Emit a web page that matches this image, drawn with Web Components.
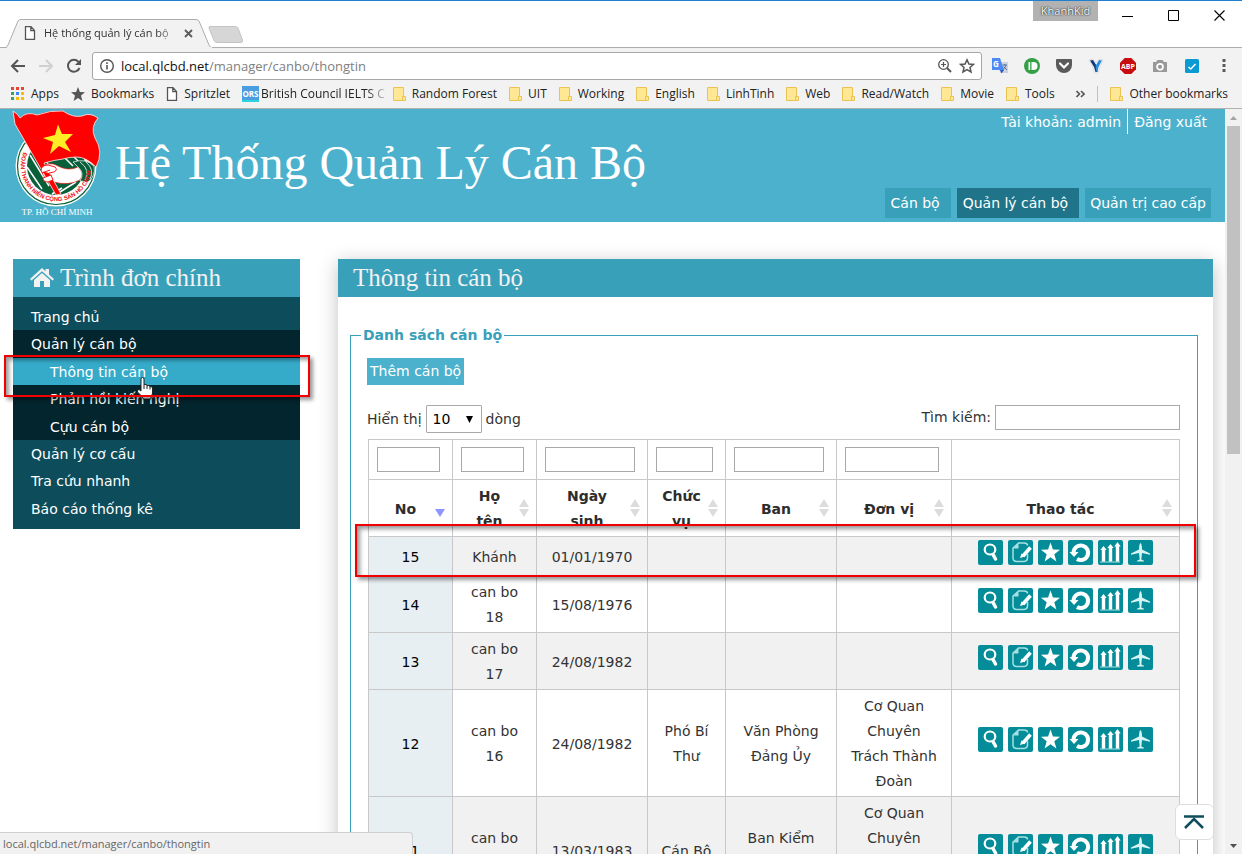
<!DOCTYPE html>
<html lang="vi">
<head>
<meta charset="utf-8">
<title>Hệ thống quản lý cán bộ</title>
<style>
  html, body { margin: 0; height: 100%; overflow: hidden; background: #fff; }
</style>
</head>
<body>
<browser-window></browser-window>
<script>
const define = (name, html) => customElements.define(name, class extends HTMLElement {
  constructor() {
    super();
    this.attachShadow({ mode: 'open' });
  }
  connectedCallback() {
    if (this.shadowRoot.childNodes.length) return;
    const t = document.createElement('template');
    t.innerHTML = '<style>*{box-sizing:border-box}</style>' + html;
    this.shadowRoot.append(t.content.cloneNode(true));
  }
});

/* ---------- browser chrome ---------- */
define('tab-strip', `
<style>
  :host { display: flex; height: 47px; background: #fff; border-top: 1px solid #1f7fd1; box-sizing: border-box; position: relative; z-index: 1; align-items: flex-end; }
  .tab { position: relative; width: 212px; height: 30px; margin: 0 0 -1px 4px; display: flex; align-items: center; padding: 0 20px; box-sizing: border-box; gap: 8px; }
  .tab > svg.shape { position: absolute; inset: 0; z-index: -1; }
  .title { font: 11px/18px "Open Sans", "Noto Sans", sans-serif; color: #333; width: 132px; white-space: nowrap;
    -webkit-mask-image: linear-gradient(90deg, #000 85%, rgba(0,0,0,.3)); mask-image: linear-gradient(90deg, #000 85%, rgba(0,0,0,.3)); }
  button { border: 0; background: none; padding: 0; display: flex; align-items: center; justify-content: center; }
  .new { margin: 0 0 3px -8px; }
  .user { align-self: flex-start; margin-left: auto; width: 65px; height: 20px; background: #b2b2b2; color: #fff; font: 11px/20px "Open Sans", sans-serif; text-align: center; text-shadow: 0 0 2px #222, 0 0 1px #222; }
  .win { display: flex; align-self: flex-start; margin-left: 6px; }
  .win button { width: 46px; height: 28px; }
</style>
<div class="tab">
  <svg class="shape" width="212" height="30"><path d="M0 29.5H2Q3 29 4 27L14 3Q15 1.500 17 1.500H192Q194 1.500 195 3L205 27Q206 29.500 208 29.500H212" fill="#f2f2f2" stroke="#adadad"/><path d="M3 29.500H208" stroke="#f2f2f2"/></svg>
  <svg width="12" height="14" viewBox="0 0 12 14"><path d="M1.500 .7H7L10.500 4.500V13.300H1.500ZM6.800 .7V4.700H10.500" fill="#fff" stroke="#555" stroke-width="1.300"/></svg>
  <span class="title">Hệ thống quản lý cán bộ</span>
  <button aria-label="Đóng"><svg width="9" height="9"><path d="M1 1L8 8M8 1L1 8" stroke="#5a5a5a" stroke-width="1.800"/></svg></button>
</div>
<button class="new" aria-label="Tab mới"><svg width="36" height="19"><path d="M2 1.500H27Q29 1.500 30 3L34.500 15Q35 17.500 33 17.500H9Q7 17.500 6 15.500L1 3Q.5 1.500 2 1.500Z" fill="#d6d6d6" stroke="#c4c4c4"/></svg></button>
<span class="user">KhanhKid</span>
<div class="win">
  <button aria-label="Thu nhỏ"><svg width="11" height="11"><path d="M0 6.500H11" stroke="#000"/></svg></button>
  <button aria-label="Phóng to"><svg width="11" height="11"><path d="M.5 .5H10.500V10.500H.5Z" fill="none" stroke="#000"/></svg></button>
  <button aria-label="Đóng cửa sổ"><svg width="11" height="11"><path d="M.5 .5L10.500 10.500M10.500 .5L.5 10.500" stroke="#000" stroke-width="1.100"/></svg></button>
</div>`);

define('address-bar', `
<style>
  :host { display: flex; height: 33px; background: #f2f2f2; border-top: 1px solid #adadad; align-items: center; padding: 4px 2px 0 0; box-sizing: border-box; }
  button { border: 0; background: none; padding: 0; display: flex; align-items: center; justify-content: center; width: 28px; height: 28px; flex: none; }
  .nav { display: flex; padding-left: 4px; width: 92px; flex: none; }
  .box { position: relative; flex: 1; height: 28px; background: #fff; border: 1px solid #a6a6a6; border-radius: 3px; display: flex; align-items: center; padding: 0 6px; min-width: 0; }
  .url { flex: 1; font: 13px/20px "Open Sans", sans-serif; color: #808080; padding-left: 6px; white-space: nowrap; }
  .url b { font-weight: 400; color: #111; }
  .box svg { flex: none; } .box svg + svg { margin-left: 6px; }
  .ext { display: flex; flex: none; padding-left: 2px; }
  .ext button { width: 32px; }
</style>
<div class="nav">
  <button aria-label="Quay lại"><svg width="16" height="14"><path d="M15 7H2M8 1L2 7L8 13" fill="none" stroke="#555" stroke-width="2"/></svg></button>
  <button aria-label="Tiến"><svg width="16" height="14"><path d="M1 7H14M8 1L14 7L8 13" fill="none" stroke="#d0d0d0" stroke-width="2"/></svg></button>
  <button aria-label="Tải lại"><svg width="16" height="16"><path d="M13.500 10A6 6 0 1 1 12.500 3.800" fill="none" stroke="#555" stroke-width="2"/><path d="M15 1V7H9Z" fill="#555"/></svg></button>
</div>
<div class="box">
  <svg width="16" height="16"><circle cx="8" cy="8" r="6.300" fill="none" stroke="#555" stroke-width="1.400"/><path d="M8 7V11.500M8 4.300V6" stroke="#555" stroke-width="1.600"/></svg>
  <span class="url"><b>local.qlcbd.net</b>/manager/canbo/thongtin</span>
  <svg width="16" height="16"><circle cx="6.500" cy="6.500" r="4.800" fill="none" stroke="#555" stroke-width="1.300"/><path d="M10 10L14 14" stroke="#555" stroke-width="2"/><path d="M4 6.500H9M6.500 4V9" stroke="#555" stroke-width="1.200"/></svg>
  <svg width="16" height="16"><path d="M8 1.800L9.900 6L14.400 6.400L11 9.400L12 13.900L8 11.500L4 13.900L5 9.400L1.600 6.400L6.100 6Z" fill="none" stroke="#555" stroke-width="1.500"/></svg>
</div>
<div class="ext">
  <button aria-label="Dịch"><svg width="18" height="16"><path d="M7 4H17V15H9Z" fill="#ccd3dc"/><path d="M1 0H9L13 12H1Z" fill="#4c8bf5"/><path d="M9 12H13L10.500 15.500Z" fill="#2a56c6"/><text x="2" y="9" font-family="Open Sans" font-size="8" font-weight="700" fill="#fff">G</text><path d="M11.500 7H16M13.800 6V7M15 7Q14 10 12 11.500M12.500 8.500L16 12" stroke="#56729a" fill="none"/></svg></button>
  <button aria-label="Pushbullet"><svg width="16" height="16"><circle cx="8" cy="8" r="8" fill="#34a046"/><path d="M4.500 4H6.200V12H4.500ZM7.500 4H9.500A4 4 0 0 1 9.500 12H7.500Z" fill="#fff"/></svg></button>
  <button aria-label="Pocket"><svg width="16" height="14"><path d="M1 0H15Q16 0 16 1V6A8 8 0 0 1 0 6V1Q0 0 1 0Z" fill="#5a5a5a"/><path d="M4 4.500L8 8.500L12 4.500" fill="none" stroke="#fff" stroke-width="2.200" stroke-linecap="round"/></svg></button>
  <button aria-label="Y"><svg width="16" height="16"><path d="M1 2L5 1L8 5L11 1L15 2L12 9L10 15H6.500L5 9Z" fill="#fff" stroke="#dcdcdc"/><path d="M2 2.500L5 2L8.500 7.500L9.500 14H7.500L6 9Z" fill="#123a7a"/><path d="M11 2L14 2.500L10.500 9L9.500 14H8.500L7.500 8Z" fill="#2d8be0"/></svg></button>
  <button aria-label="Adblock Plus"><svg width="16" height="16"><path d="M4.700 0H11.300L16 4.700V11.300L11.300 16H4.700L0 11.300V4.700Z" fill="#c70d0d"/><text x="8" y="10.800" text-anchor="middle" font-family="Open Sans" font-size="7" font-weight="700" fill="#fff">ABP</text></svg></button>
  <button aria-label="Chụp ảnh"><svg width="16" height="14"><path d="M1 3H4L5.500 1H10.500L12 3H15V13H1Z" fill="#999"/><circle cx="8" cy="7.800" r="3" fill="#999" stroke="#fff" stroke-width="1.700"/></svg></button>
  <button aria-label="Hoàn tất"><svg width="14" height="14"><rect width="14" height="14" rx="1.500" fill="#0a9bd2"/><path d="M3.500 8L5.800 10L10.500 5" fill="none" stroke="#fff" stroke-width="1.500"/></svg></button>
  <button aria-label="Menu"><svg width="4" height="14"><path d="M.5 0h3v3h-3zM.5 5h3v3h-3zM.5 10h3v3h-3z" fill="#5a5a5a"/></svg></button>
</div>`);

const FOLDER = '<svg width="13" height="14"><path d="M.5 .5H10.500V9.500H12.500V13.500H.5Z" fill="#ffe793" stroke="#eac452"/><path d="M9.500 13V9.500H12" stroke="#eac452" fill="none"/></svg>';
const folder = n => `<a href="#">${FOLDER}<span>${n}</span></a>`;
define('bookmark-bar', `
<style>
  :host { display: flex; height: 29px; background: #f2f2f2; border-bottom: 1px solid #b0b0b0; align-items: center; padding: 0 14px 0 11px; gap: 12px; font: 12px/18px "Open Sans", sans-serif; box-sizing: border-box; }
  a { display: flex; align-items: center; gap: 6px; color: #222; text-decoration: none; white-space: nowrap; flex: none; }
  svg { flex: none; }
  .fade { gap: 2px; margin-right: -4px; }
  .fade span { -webkit-mask-image: linear-gradient(90deg, #000 85%, rgba(0,0,0,.2)); mask-image: linear-gradient(90deg, #000 85%, rgba(0,0,0,.2)); }
  .end { margin-left: auto; }
  .sep { width: 1px; height: 16px; background: #c0c0c0; flex: none; }
</style>
<a href="#"><svg width="14" height="14"><path d="M0 0h3v3H0zM5 0h3v3H5zM10 0h3v3h-3z" fill="#ea4335"/><path d="M0 5h3v3H0z" fill="#34a853"/><path d="M5 5h3v3H5z" fill="#4285f4"/><path d="M10 5h3v3h-3z" fill="#fbbc05"/><path d="M0 10h3v3H0z" fill="#34a853"/><path d="M5 10h3v3H5zM10 10h3v3h-3z" fill="#fbbc05"/></svg><span>Apps</span></a>
<a href="#"><svg width="14" height="14"><path d="M7 0L8.900 5L14 5.300L10 8.600L11.400 14L7 10.900L2.600 14L4 8.600L0 5.300L5.100 5Z" fill="#555"/></svg><span>Bookmarks</span></a>
<a href="#"><svg width="12" height="14"><path d="M1.500 .7H7L10.500 4.500V13.300H1.500ZM6.800 .7V4.700H10.500" fill="#fff" stroke="#555" stroke-width="1.300"/></svg><span>Spritzlet</span></a>
<a href="#" class="fade"><svg width="17" height="16"><rect width="17" height="16" fill="#4a9ee0"/><rect y="14" width="17" height="2" fill="#2ed3e0"/><text x="8.500" y="11" text-anchor="middle" font-family="Open Sans" font-size="8" font-weight="700" fill="#fff">ORS</text></svg><span>British Council IELTS C</span></a>
${['Random Forest', 'UIT', 'Working', 'English', 'LinhTinh', 'Web', 'Read/Watch', 'Movie', 'Tools'].map(folder).join('')}
<a href="#" class="end" aria-label="Thêm"><svg width="9" height="8"><path d="M.5 1L3.500 4L.5 7M5 1L8 4L5 7" fill="none" stroke="#555" stroke-width="1.600"/></svg></a>
<span class="sep"></span>
${folder('Other bookmarks')}`);

define('page-scrollbar', `
<style>
  :host { display: flex; flex-direction: column; align-items: center; justify-content: space-between; width: 17px; flex: none; background: #f1f1f1; padding: 6px 0; box-sizing: border-box; }
  .thumb { width: 13px; height: 328px; background: #c1c1c1; }
  .top { display: flex; flex-direction: column; align-items: center; gap: 6px; }
</style>
<div class="top"><svg width="7" height="5"><path d="M0 5L3.500 1L7 5Z" fill="#a3a3a3"/></svg><div class="thumb"></div></div>
<svg width="7" height="4"><path d="M0 0H7L3.500 4Z" fill="#505050"/></svg>`);

/* ---------- site ---------- */
define('union-logo', `
<style>:host { display: block; } svg { display: block; }</style>
<svg width="90" height="110" viewBox="0 0 90 110">
  <defs><path id="ring" d="M11.500 43A35.500 35.500 0 1 0 79 64"/></defs>
  <circle cx="44" cy="57" r="40.500" fill="#fff"/>
  <circle cx="44" cy="57" r="38.500" fill="none" stroke="#086238" stroke-width="1.200"/>
  <circle cx="44" cy="57" r="29" fill="#07603a"/>
  <g stroke="#fff" stroke-width="1.500" fill="none"><path d="M18 46L37 77M24 37L42 64M15 58L30 80M50 46L61 57M58 44L66 52M48 83L64 73M40 85L50 79"/></g>
  <path d="M30 57Q38 53 44 56Q56 63 66 58Q73 64 68 71Q56 77 42 73Q32 71 30 63Z" fill="#fff" stroke="#fe0000" stroke-width=".6"/>
  <path d="M61 53Q74 49 82 57Q84 67 76 73L68 72Q73 64 66 58Z" fill="#07603a" stroke="#fff" stroke-width=".7"/>
  <path d="M68 53Q79 61 73 71M74 53Q83 61 78 70" fill="none" stroke="#fff" stroke-width=".8"/>
  <path d="M1 2Q6 5 8 9Q15 2 25 6Q39 1 51 2Q61 9 70 7Q78 3 86 9Q78 18 83 29Q92 43 84 58Q74 48 65 48Q57 48 51 50Q42 51 32 54L49 85L44 86L3 15Z" fill="#fe0000" stroke="#ffd8d8" stroke-width=".9"/>
  <path d="M46 15.500L50 25L61 25L53 33L59 43L47 37L38 45L41 33L31 29L43 26Z" fill="#ffee25"/>
  <path d="M29 62Q29 56 36 56L43 58Q46 61 42 63L37 64M30 64L38 61M31 69L39 66L41 71L36 73Q31 73 31 69Z" fill="#fff" stroke="#fe0000" stroke-width=".9"/>
  <text font-family="Liberation Sans" font-size="6" font-weight="700" fill="#e11"><textPath href="#ring">ĐOÀN THANH NIÊN CỘNG SẢN HỒ CHÍ MINH</textPath></text>
  <text x="45" y="106" text-anchor="middle" font-family="Liberation Serif" font-size="9" fill="#fff">TP. HỒ CHÍ MINH</text>
</svg>`);

define('site-header', `
<style>
  :host { display: flex; height: 113px; background: #4cb1cd; color: #fff; padding: 0 14px 4px 12px; box-sizing: border-box; }
  h1 { margin: 26px 0 0 13px; font: 48px/56px "Liberation Serif", serif; white-space: nowrap; }
  .right { margin-left: auto; display: flex; flex-direction: column; justify-content: space-between; align-items: flex-end; }
  a { color: #fff; text-decoration: none; white-space: nowrap; }
  .account { display: flex; font: 14px/25px "DejaVu Sans", sans-serif; padding-right: 4px; }
  .account a { line-height: 24px; padding-top: 1px; }
  .account a + a { border-left: 1px solid #fff; margin-left: 6px; padding-left: 6px; }
  nav { display: flex; gap: 6px; font: 14px/30px "DejaVu Sans", sans-serif; }
  nav a { padding: 0 5px; background: #39a0ba; }
  nav a.wide { padding: 0 11px 0 6px; }
  nav a.on { background: #1f7489; }
</style>
<union-logo></union-logo>
<h1>Hệ Thống Quản Lý Cán Bộ</h1>
<div class="right">
  <div class="account"><a href="#">Tài khoản: admin</a><a href="#">Đăng xuất</a></div>
  <nav><a class="wide" href="#">Cán bộ</a><a class="wide on" href="#">Quản lý cán bộ</a><a href="#">Quản trị cao cấp</a></nav>
</div>`);

define('side-menu', `
<style>
  :host { display: block; width: 287px; flex: none; background: #0d4c5b; font: 14px/27px "DejaVu Sans", sans-serif; }
  h2 { margin: 0; height: 38px; background: #39a0ba; color: #f2f2f2; font: 25px/37px "Liberation Serif", serif; display: flex; align-items: center; gap: 6px; padding: 0 0 1px 17px; white-space: nowrap; box-sizing: border-box; }
  ul { list-style: none; margin: 0; padding: 0; }
  .root { display: grid; grid-template-rows: repeat(8, 1fr); height: 232px; padding: 6px 0 7px; }
  .root > li { display: grid; }
  .group { grid-row: span 4; grid-template-rows: subgrid; background: #03252e; }
  .group > ul { grid-row: span 3; display: grid; grid-template-rows: subgrid; }
  a { display: block; padding: 1px 0 0 18px; line-height: 26px; color: #fff; text-decoration: none; white-space: nowrap; }
  .group > ul a { padding-left: 37px; }
  .on { position: relative; background: #35abc9; }
  .mark { position: absolute; inset: -3px -10px -12px -9px; border: 2px solid #f00000; box-shadow: 3px 3px 4px rgba(0,0,0,.4), inset 3px 3px 4px rgba(0,0,0,.4); z-index: 2; }
  .hand { position: absolute; left: 122px; top: 18px; z-index: 1; }
</style>
<h2><svg width="24" height="20" viewBox="0 0 24 20"><path d="M12 0L15.500 3.300V1H19V6.500L24 11L22.500 12.600L12 3.200L1.500 12.600L0 11Z" fill="#f2f2f2"/><path d="M12 5L20 12V19H14V13H10V19H4V12Z" fill="#f2f2f2"/></svg>Trình đơn chính</h2>
<ul class="root">
  <li><a href="#">Trang chủ</a></li>
  <li class="group"><a href="#">Quản lý cán bộ</a>
    <ul>
      <li class="on"><a href="#">Thông tin cán bộ</a><span class="mark"></span>
        <svg class="hand" width="20" height="24" viewBox="0 0 20 24"><path d="M6 15V3Q6 1.500 7.500 1.500T9 3V9Q9.500 8 11 8.500T12 10Q13 9 14 9.500T15 11Q16 10 17 11T17.500 13V17Q17 20 15.500 23H8.500Q6 19 2.500 16Q2 13.500 4 13.500Z" fill="#fff" stroke="#222"/><path d="M9 9V13M12 10V13M15 11V13.500" stroke="#222"/></svg></li>
      <li><a href="#">Phản hồi kiến nghị</a></li>
      <li><a href="#">Cựu cán bộ</a></li>
    </ul></li>
  <li><a href="#">Quản lý cơ cấu</a></li>
  <li><a href="#">Tra cứu nhanh</a></li>
  <li><a href="#">Báo cáo thống kê</a></li>
</ul>`);

define('row-actions', `
<style>
  :host { display: flex; justify-content: center; gap: 5px; padding: 0 0 7px; }
  button { width: 25px; height: 25px; border: 0; padding: 0; border-radius: 2px; background: #048d99; display: block; }
  svg { display: block; fill: none; stroke: #fff; }
</style>
<button aria-label="Xem"><svg width="25" height="25"><ellipse cx="12" cy="9.500" rx="5.300" ry="5" stroke-width="2.200"/><path d="M15 14.500L17.500 19" stroke-width="3.500" stroke-linecap="round"/></svg></button>
<button aria-label="Sửa"><svg width="25" height="25"><path d="M19.500 14V18Q19.500 21 16 21.500H9Q5 21.500 5 18V8L10.500 3H16Q19.500 3 19.500 5.500" stroke="#a5e0e2" stroke-width="1.500"/><path d="M5 8.500L10.500 3V8.500Z" fill="#a5e0e2" stroke="none"/><path d="M22.500 7.500L15 16" stroke-width="3.600"/><path d="M13.500 13.500L12 18L17 16.500Z" fill="#fff" stroke="none"/></svg></button>
<button aria-label="Đánh dấu"><svg width="25" height="25"><path d="M12.500 2.500L14.900 9.500L22 9.800L16.300 14.300L18.400 21.500L12.500 17.200L6.600 21.500L8.700 14.300L3 9.800L10.100 9.500Z" fill="#fff" stroke="none"/></svg></button>
<button aria-label="Khôi phục"><svg width="25" height="25"><path d="M5.500 12.500A7.300 7.300 0 1 1 9 19" stroke-width="4"/><path d="M1.500 12H10.500L6 17Z" fill="#fff" stroke="none"/></svg></button>
<button aria-label="Thăng tiến"><svg width="25" height="25"><path d="M2 22H22" stroke="#a5e0e2"/><path d="M5.500 21.500V9M12.500 21.500V7M19.500 21.500V6" stroke-width="3.400"/><path d="M2.300 10L5.500 6L8.700 10ZM9.300 8L12.500 4L15.700 8ZM16.300 6.500L19.500 2L22.700 6.500Z" fill="#fff" stroke="none"/></svg></button>
<button aria-label="Công tác"><svg width="25" height="25"><path d="M12.500 3Q14 4 14 9.500L22 13.500V14.800L14 13L13.300 19.500L16 20.700V21.500H9V20.700L11.700 19.500L11 13L3 14.800V13.500L11 9.500Q11 4 12.500 3Z" fill="#d8f4f4" stroke="none"/></svg></button>`);

const rows = [
  ['15', 'Khánh', '01/01/1970', '', '', ''],
  ['14', 'can bo 18', '15/08/1976', '', '', ''],
  ['13', 'can bo 17', '24/08/1982', '', '', ''],
  ['12', 'can bo 16', '24/08/1982', 'Phó Bí Thư', 'Văn Phòng Đảng Ủy', 'Cơ Quan Chuyên Trách Thành Đoàn'],
  ['11', 'can bo 15', '13/03/1983', 'Cán Bộ', 'Ban Kiểm Tra', 'Cơ Quan Chuyên Trách Thành Đoàn'],
];
const heads = ['No', 'Họ tên', 'Ngày sinh', 'Chức vụ', 'Ban', 'Đơn vị', 'Thao tác'];
const sort = i => i
  ? '<svg width="10" height="18"><path d="M0 8L5 0L10 8ZM0 10L5 18L10 10Z" fill="#dcdcdc"/></svg>'
  : '<svg width="10" height="18"><path d="M0 10L5 18L10 10Z" fill="#8d94ff"/></svg>';
define('staff-table', `
<style>
  :host { display: block; position: relative; color: #333; font: 14px/25px "DejaVu Sans", sans-serif; }
  table { border-collapse: collapse; table-layout: fixed; width: 100%; }
  th, td { border: 1px solid #c8c8c8; text-align: center; vertical-align: middle; padding: 4px 12px 2px; }
  .filters td { height: 40px; padding: 0 12px 0 8px; }
  input { display: block; width: 100%; height: 25px; border: 1px solid #a9a9a9; padding: 0; background: #fff; }
  th { position: relative; padding: 4px 22px 2px 12px; color: #2d2d2d; }
  th svg { position: absolute; right: 7px; top: 19px; }
  tbody tr:nth-child(odd) { background: #f1f1f1; }
  tbody td:first-child { background: #e7eff3; color: #000; }
  tbody td:last-child { padding: 3px 0; }
  .c1 { width: 84px } .c3 { width: 111px } .c4 { width: 78px } .c6 { width: 115px }
  .mark { position: absolute; left: -13px; right: -16px; top: 85px; height: 53px; border: 2px solid #f00000; box-shadow: 3px 3px 4px rgba(0,0,0,.4), inset 3px 3px 4px rgba(0,0,0,.4); pointer-events: none; }
</style>
<table>
  <colgroup><col class="c1"><col class="c1"><col class="c3"><col class="c4"><col class="c3"><col class="c6"><col></colgroup>
  <thead>
    <tr class="filters">${heads.map((h, i) => i < 6 ? `<td><input type="text" aria-label="${h}"></td>` : '<td></td>').join('')}</tr>
    <tr>${heads.map((h, i) => `<th>${h}${sort(i)}</th>`).join('')}</tr>
  </thead>
  <tbody>${rows.map(r => `<tr>${r.map(c => `<td>${c}</td>`).join('')}<td><row-actions></row-actions></td></tr>`).join('')}</tbody>
</table>
<div class="mark"></div>`);

define('content-panel', `
<style>
  :host { display: block; flex: 1; min-width: 0; background: #fff; box-shadow: 0 4px 18px rgba(0,0,0,.25); font: 14px/25px "DejaVu Sans", sans-serif; color: #333; }
  h2 { margin: 0; height: 38px; background: #39a0ba; color: #f2f2f2; font: 25px/37px "Liberation Serif", serif; padding-left: 15px; }
  fieldset { margin: 26px 15px 0 12px; border: 1px solid #39a0ba; padding: 10px 17px 20px 16px; min-width: 0; }
  legend { color: #39a0ba; font-weight: 700; padding: 0 2px; margin-left: -6px; line-height: 25px; }
  .add { display: block; border: 0; background: #4cb1cd; color: #fff; font: inherit; line-height: 27px; padding: 0 3px; }
  .tools { display: flex; justify-content: space-between; align-items: flex-start; margin: 20px 0 6px; }
  label { display: flex; align-items: center; gap: 4px; white-space: nowrap; }
  .sel { position: relative; display: flex; }
  select { appearance: none; -webkit-appearance: none; width: 56px; height: 28px; border: 1px solid #a9a9a9; border-radius: 1px; background: #fff; color: #000; font: inherit; padding: 0 6px; }
  .sel svg { position: absolute; right: 9px; top: 11px; }
  input { width: 185px; height: 25px; border: 1px solid #a9a9a9; padding: 0 4px; font: inherit; }
  staff-table { margin-left: 1px; }
</style>
<h2>Thông tin cán bộ</h2>
<fieldset>
  <legend>Danh sách cán bộ</legend>
  <button class="add">Thêm cán bộ</button>
  <div class="tools">
    <label>Hiển thị <span class="sel"><select><option>10</option></select><svg width="7" height="7"><path d="M0 0H7L3.500 7Z" fill="#000"/></svg></span> dòng</label>
    <label>Tìm kiếm: <input type="search"></label>
  </div>
  <staff-table></staff-table>
</fieldset>`);

define('browser-window', `
<style>
  :host { display: flex; flex-direction: column; height: 100vh; position: relative; overflow: hidden; }
  tab-strip, address-bar, bookmark-bar { flex: none; }
  .view { flex: 1; min-height: 0; display: flex; }
  .page { flex: 1; min-width: 0; overflow: hidden; }
  .cols { display: flex; align-items: flex-start; gap: 38px; padding: 37px 12px 40px 13px; }
  .status { position: absolute; left: 0; bottom: 0; z-index: 5; width: 413px; height: 22px; background: #f1f1f1; border: 1px solid #cfcfcf; border-width: 1px 1px 0 0; border-radius: 0 4px 0 0; color: #666; font: 11px/21px "Open Sans", sans-serif; padding-left: 3px; }
  .up { position: absolute; right: 28px; bottom: 14px; z-index: 5; width: 39px; height: 36px; padding: 0 2px 0 0; background: #fff; border: 1px solid #dedede; border-radius: 6px; display: flex; align-items: center; justify-content: center; }
</style>
<tab-strip></tab-strip>
<address-bar></address-bar>
<bookmark-bar></bookmark-bar>
<div class="view">
  <div class="page">
    <site-header></site-header>
    <div class="cols"><side-menu></side-menu><content-panel></content-panel></div>
  </div>
  <page-scrollbar></page-scrollbar>
</div>
<div class="status">local.qlcbd.net/manager/canbo/thongtin</div>
<button class="up" aria-label="Lên đầu trang"><svg width="20" height="14"><path d="M0 1.500H20" stroke="#0d4c5b" stroke-width="2.500"/><path d="M1 13L10 4L19 13" fill="none" stroke="#0d4c5b" stroke-width="2.500"/></svg></button>`);
</script>
</body>
</html>
